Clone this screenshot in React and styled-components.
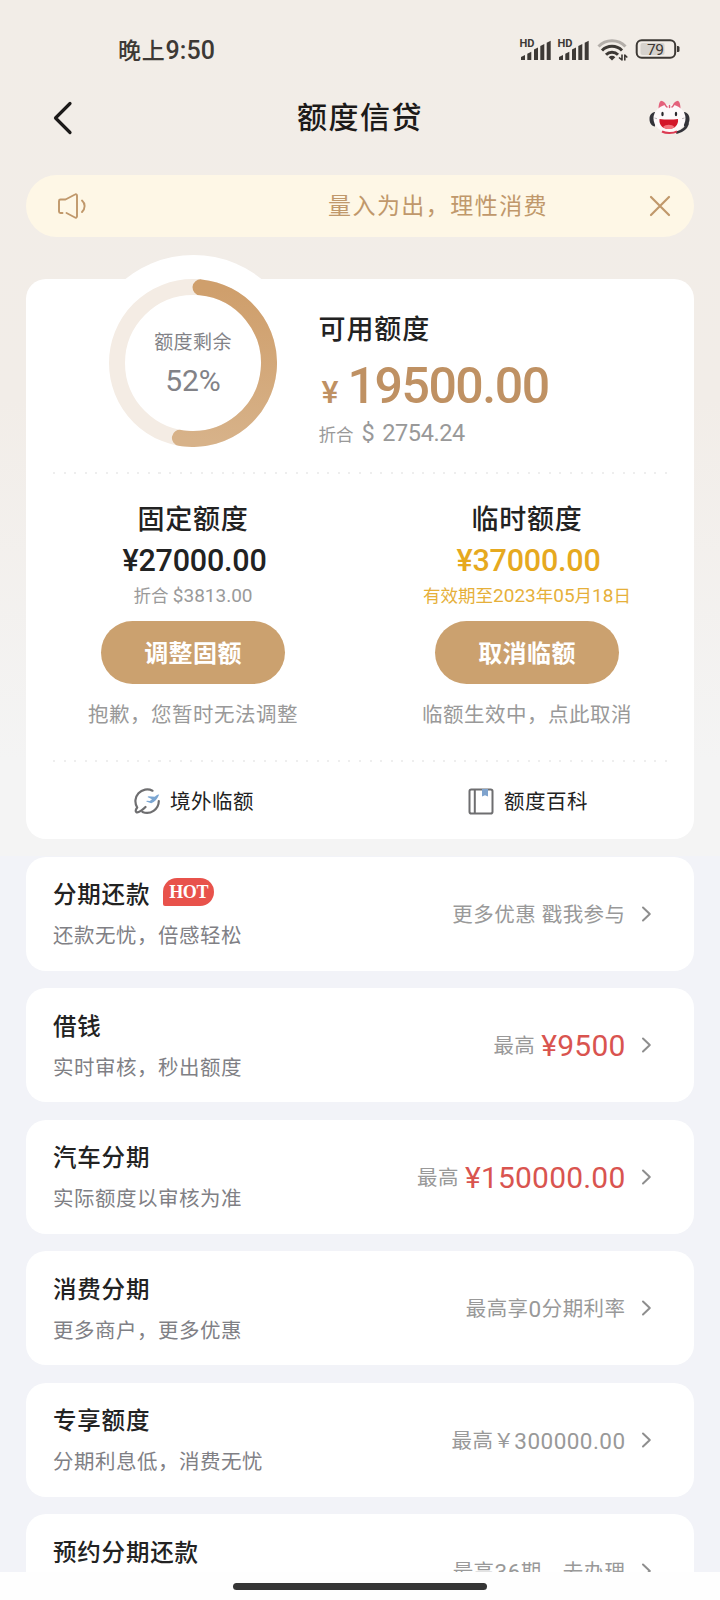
import React from 'react';
import styled, { createGlobalStyle } from 'styled-components';

const GlobalStyle = createGlobalStyle`
  * {
    box-sizing: border-box;
  }

  body {
    margin: 0;
    font-family: Roboto, 'Noto Sans CJK SC', sans-serif;
    color: #222;
  }
`;

const Screen = styled.div`
  width: 720px;
  height: 1600px;
  display: flex;
  flex-direction: column;
  overflow: hidden;
  background: #fefefe;
`;

const Page = styled.div`
  height: 1571.5px;
  flex: none;
  overflow: hidden;
  background: linear-gradient(180deg, #f2ede7 0, #f2ede8 400px, #f4f4f4 760px, #f4f4f4 856px, #f2f3f8 856px);
`;

const StatusBar = styled.div`
  height: 85px;
  padding: 17px 40px 0 118px;
  display: flex;
  align-items: center;
  justify-content: space-between;
`;

const Time = styled.div`
  font-size: 23px;
  line-height: 30px;
  font-weight: 500;
  letter-spacing: 0.7px;
  color: #3d3935;

  span {
    font-size: 25px;
    letter-spacing: 0.1px;
  }
`;

const NavBar = styled.div`
  height: 65px;
  padding: 0 28px 0 52px;
  display: grid;
  grid-template-columns: 80px 1fr 104px;
  align-items: center;
`;

const Title = styled.h1`
  margin: 0;
  padding-top: 1px;
  font-size: 30px;
  line-height: 40px;
  font-weight: 500;
  letter-spacing: 1.5px;
  text-align: center;
  color: #1c1a19;
`;

const Helper = styled.div`
  display: flex;
  justify-content: flex-end;
`;

const Notice = styled.div`
  height: 62px;
  margin: 25px 26px 0;
  padding: 0 23px 0 31px;
  border-radius: 31px;
  display: flex;
  align-items: center;
  background: #fef7e6;
  color: #c0986b;
`;

const NoticeText = styled.div`
  flex: 1;
  padding: 2px 0 0 241px;
  font-size: 23px;
  line-height: 32px;
  letter-spacing: 1.45px;
  white-space: nowrap;
`;

const Panel = styled.section`
  height: 559.5px;
  margin: 42px 26px 0;
  border-radius: 20px;
  background: #fff;
`;

const Summary = styled.div`
  height: 193px;
  padding-left: 58.5px;
  display: flex;
`;

const Dial = styled.div`
  width: 217px;
  height: 217px;
  margin-top: -24.5px;
  border-radius: 50%;
  display: grid;
  place-items: center;
  background: #fff;

  & > * {
    grid-area: 1 / 1;
  }
`;

const DialLabel = styled.div`
  text-align: center;
  color: #828287;

  p {
    margin: 0;
    font-size: 19px;
    line-height: 28px;
    letter-spacing: 0.4px;
  }

  strong {
    display: block;
    margin-top: 7px;
    font-size: 30px;
    line-height: 34px;
    font-weight: 400;
    letter-spacing: 0;
  }
`;

const Available = styled.div`
  padding: 32px 0 0 17px;

  h2 {
    margin: 0;
    font-size: 27px;
    line-height: 38px;
    font-weight: 500;
    letter-spacing: 0.9px;
  }
`;

const BigAmount = styled.div`
  height: 54px;
  margin-top: 10px;
  display: flex;
  align-items: baseline;
  color: #bf9163;
  font-size: 50px;
  line-height: 54px;
  font-weight: 500;
  letter-spacing: -1.45px;

  small {
    width: 29px;
    padding-left: 3px;
    font-size: 32px;
    letter-spacing: 0;
  }
`;

const Converted = styled.div`
  margin-top: 6px;
  display: flex;
  align-items: baseline;
  font-size: 17.5px;
  line-height: 28px;
  color: #999;

  span {
    margin-left: 8px;
    font-size: 23.5px;
    letter-spacing: -0.4px;
    word-spacing: 2.5px;
  }
`;

const Dots = styled.div`
  height: 2px;
  margin: 0 26px 0 27px;
  background: repeating-linear-gradient(90deg, #eee 0 2px, transparent 2px 10.55px);
`;

const Columns = styled.div`
  display: flex;
`;

const Column = styled.div`
  flex: 1;
  height: 286px;
  padding-top: 27px;
  display: flex;
  flex-direction: column;
  align-items: center;

  h3 {
    margin: 0;
    font-size: 27px;
    line-height: 38px;
    font-weight: 500;
    letter-spacing: 0.8px;
  }
`;

const Amount = styled.div`
  margin-top: 1px;
  padding-left: 3px;
  font-size: 30.5px;
  line-height: 42px;
  font-weight: 500;
  letter-spacing: -0.2px;
  color: ${(props) => (props.$gold ? '#e6a91f' : '#222')};
`;

const Hint = styled.div`
  font-size: 17.5px;
  line-height: 28px;
  white-space: nowrap;
  color: ${(props) => (props.$gold ? '#e6b03a' : '#9a9a9a')};

  span {
    font-size: 19px;
  }
`;

const Pill = styled.button`
  width: 184px;
  height: 63px;
  margin-top: 11px;
  padding: 0 0 2px;
  border: none;
  border-radius: 32px;
  background: #cba16f;
  color: #fff;
  font-family: inherit;
  font-size: 24px;
  font-weight: 700;
  letter-spacing: 0.4px;
`;

const Remark = styled.div`
  margin-top: 16px;
  font-size: 20.5px;
  line-height: 30px;
  letter-spacing: 0.5px;
  white-space: nowrap;
  color: #999;
`;

const Shortcut = styled.div`
  flex: 1;
  height: 75px;
  padding-left: 2px;
  display: flex;
  align-items: center;
  justify-content: center;
  gap: 10px;
  font-size: 20.5px;
  letter-spacing: 0.5px;

  svg {
    margin-top: 3px;
  }
`;

const List = styled.div`
  margin: 18px 26px 0;
  display: flex;
  flex-direction: column;
  gap: 17.5px;
`;

const Row = styled.div`
  height: 114px;
  padding: 0 41px 0 27px;
  border-radius: 20px;
  display: flex;
  align-items: center;
  background: #fff;
`;

const RowText = styled.div`
  flex: 1;
  padding-top: 2px;
`;

const RowTitle = styled.div`
  display: flex;
  align-items: center;
  gap: 13px;
  font-size: 23.5px;
  line-height: 36px;
  font-weight: 500;
  letter-spacing: 0.8px;
`;

const RowNote = styled.div`
  min-height: 32px;
  margin-top: 7px;
  font-size: 20.5px;
  line-height: 32px;
  letter-spacing: 0.5px;
  color: #808085;
`;

const HotTag = styled.span`
  width: 51px;
  height: 28px;
  margin-top: -6px;
  border-radius: 14px 14px 14px 2px;
  background: #e8524b;
  color: #fff;
  font-family: 'Liberation Serif', serif;
  font-size: 18px;
  line-height: 28px;
  font-weight: 700;
  letter-spacing: -0.3px;
  text-align: center;
`;

const RowValue = styled.div`
  margin-right: 15.5px;
  padding-top: 2px;
  display: flex;
  align-items: center;
  font-size: 20.5px;
  line-height: 40px;
  letter-spacing: 0.45px;
  color: #999;
  white-space: pre;

  span {
    font-size: 22.5px;
  }

  em {
    margin-left: 6px;
    font-size: 30px;
    font-style: normal;
    letter-spacing: 0.2px;
    color: #d9544f;
  }
`;

const HomeArea = styled.div`
  flex: 1;
  padding-top: 11.5px;
  display: flex;
  justify-content: center;
`;

const HomeBar = styled.div`
  width: 254px;
  height: 7px;
  border-radius: 4px;
  background: #353535;
`;

const rows = [
  { title: '分期还款', hot: true, note: '还款无忧，倍感轻松', value: '更多优惠 戳我参与' },
  { title: '借钱', note: '实时审核，秒出额度', value: '最高', money: '¥9500' },
  { title: '汽车分期', note: '实际额度以审核为准', value: '最高', money: '¥150000.00' },
  { title: '消费分期', note: '更多商户，更多优惠', value: '最高享0分期利率' },
  { title: '专享额度', note: '分期利息低，消费无忧', value: '最高￥300000.00' },
  { title: '预约分期还款', value: '最高36期，去办理' },
];

// digits sit a little larger than the Chinese characters beside them
const withDigits = (text) =>
  text.split(/([$\d.]+)/).map((part, i) => (i % 2 ? <span key={i}>{part}</span> : part));

const signalBars = [
  [2, 16],
  [8.3, 12.7],
  [15, 8.5],
  [21.3, 5],
  [27.7, 1.7],
];

const Signal = ({ x }) => (
  <g transform={`translate(${x} 0)`}>
    <text x="0.5" y="7.8" fontSize="10" fontWeight="700" textLength="15" lengthAdjust="spacingAndGlyphs">HD</text>
    {signalBars.map(([left, top]) => (
      <path key={left} d={`M${left} ${top + 2}l4-2V21h-4z`} />
    ))}
  </g>
);

const StatusIcons = () => (
  <svg width="161" height="32" viewBox="0 -4 161 32" fill="#3d3935" fontFamily="Roboto, sans-serif">
    <Signal x={0} />
    <Signal x={38} />
    <g fill="none" stroke="#3d3935" strokeWidth="3">
      <path d="M79.5 7.5a18.5 18.5 0 0 1 27 0" stroke="#b3aea9" />
      <path d="M83 11.5a14 14 0 0 1 20 0" />
      <path d="M87 15.7a8.5 8.5 0 0 1 12 0" />
    </g>
    <path d="M93 21.5l-3.3-3.3a4.6 4.6 0 0 1 6.6 0z" />
    <g fill="none" strokeLinejoin="round">
      <path d="M103 15.5v5.5l-3-2.5M105.8 21.5V16l2.5 2.5" stroke="#f2ede7" strokeWidth="3.5" />
      <path d="M103 15.5v5.5l-3-2.5M105.8 21.5V16l2.5 2.5" stroke="#3d3935" strokeWidth="1.6" />
    </g>
    <rect x="117.7" y="1.2" width="38.5" height="17.6" rx="5" fill="none" stroke="#3d3935" strokeWidth="2" />
    <rect x="121.5" y="4" width="24" height="12" rx="2" fill="#d6d2cd" />
    <path d="M158 7h1a1.500 1.500 0 0 1 1.500 1.500v3a1.500 1.500 0 0 1-1.500 1.500h-1z" />
    <text x="128" y="15.500" fontSize="15.500" textLength="17">79</text>
  </svg>
);

const BackIcon = () => (
  <svg width="22" height="34" viewBox="0 0 22 34" fill="none" stroke="#1c1a19" strokeWidth="3.2" strokeLinecap="round" strokeLinejoin="round">
    <path d="M18 2.5L3.5 17 18 31.5" />
  </svg>
);

const CatIcon = () => (
  <svg width="44" height="37" viewBox="0 0 44 37">
    <path d="M10.500 10.500c0-4 .5-7.500 2.500-8.700 2.500.2 4.500 2 5.500 5zM32.500 10.500c0-4-.5-7.500-2.500-8.700-2.500.2-4.500 2-5.500 5z" fill="#e4627c" />
    <path d="M7 13c-3.500.5-5.500 3-5.500 7s2 7 5.500 7.500zM36 13c3.500.5 5.500 3 5.500 7s-2 7-5.500 7.500z" fill="#34343a" />
    <path d="M39.500 25c-1.500 4.500-5 7-10.500 8.500" fill="none" stroke="#34343a" strokeWidth="2.600" strokeLinecap="round" />
    <ellipse cx="21.500" cy="19.500" rx="16" ry="14" fill="#fdf9fa" />
    <path d="M14 32.500c4 2 11 2 15-.2" fill="none" stroke="#dc3b52" strokeWidth="2" />
    <path d="M17.500 6.500l1.500 1.500M25.500 6.500L24 8M21.500 6.500v2" stroke="#de5f78" strokeWidth="1.500" strokeLinecap="round" />
    <path d="M6.500 19l2.500.7M36.500 19l-2.500.7" stroke="#a9a4aa" strokeWidth=".8" />
    <ellipse cx="14.500" cy="15" rx="1.200" ry="2.200" fill="#29272b" />
    <ellipse cx="28" cy="15" rx="1.200" ry="2.200" fill="#29272b" />
    <path d="M11.500 20c6 .8 13 .8 18.500 0 .8 6-3.500 10-9.300 10S10.700 26 11.500 20z" fill="#d3172a" />
    <path d="M15 28c2.500-3 9-3 11.500 0-3 2.700-8.500 2.700-11.500 0z" fill="#f4737c" />
  </svg>
);

const SpeakerIcon = () => (
  <svg width="30" height="28" viewBox="0 0 30 28" fill="none" stroke="#c0986b" strokeWidth="1.9" strokeLinecap="round" strokeLinejoin="round">
    <path d="M5.500 21H3.500a1.500 1.500 0 0 1-1.500-1.500V9a1.500 1.500 0 0 1 1.500-1.500h5L18 2.500a1.300 1.300 0 0 1 2 1v21a1.300 1.300 0 0 1-2 1L9.500 21" />
    <path d="M25 8.500c3.500 3 3.500 8 0 11.500" />
  </svg>
);

const CloseIcon = () => (
  <svg width="22" height="22" viewBox="0 0 22 22" stroke="#c0986b" strokeWidth="2.2" strokeLinecap="round">
    <path d="M2 2l18 18M20 2L2 20" />
  </svg>
);

const Ring = ({ from, sweep }) => (
  <svg width="168" height="168" viewBox="0 0 168 168" fill="none" strokeWidth="16">
    <defs>
      {/* runs along x because the arc is turned to start near the top */}
      <linearGradient id="ring" x1="1" y1="0" x2="0" y2="0">
        <stop offset="0" stopColor="#cf9f6c" />
        <stop offset="1" stopColor="#d7b289" />
      </linearGradient>
    </defs>
    <circle cx="84" cy="84" r="76" stroke="#f4ece4" />
    <circle
      cx="84"
      cy="84"
      r="76"
      pathLength="360"
      strokeDasharray={`${sweep} 360`}
      transform={`rotate(${from - 90} 84 84)`}
      stroke="url(#ring)"
      strokeLinecap="round"
    />
  </svg>
);

const PlaneIcon = () => (
  <svg width="26" height="27" viewBox="0 0 26 27" fill="none" strokeLinecap="round">
    <path d="M18.500 2.700A11.800 11.800 0 0 0 3.200 19.500M24.800 13A11.800 11.800 0 0 1 8.500 23.900M3.200 19.500c-2.200 3-2 5.300.8 4.700 2.500-.7 5-2.700 7.500-5.200" stroke="#6e6e70" strokeWidth="2.200" />
    <path d="M25.200 6.500c-1.800-.2-3 .8-4.500 2.300l-6.200-.6-1 .8 4.500 2.300-2.200 1.800-3-.3-.6.600 5 1.800c3.500-1 6-4 8-8.700z" fill="#7ba6d2" />
  </svg>
);

const BookIcon = () => (
  <svg width="26" height="27" viewBox="0 0 26 27" fill="none" stroke="#6e6e70" strokeWidth="2">
    <rect x="1.500" y="1.500" width="23" height="24" rx="1.800" />
    <path d="M6.800 1.500v24" />
    <path d="M14 1h6v7.500L17 7.300l-3 1.200z" fill="#7fa3cd" stroke="none" />
  </svg>
);

const ArrowIcon = () => (
  <svg width="12" height="18" viewBox="0 0 12 18" fill="none" stroke="#8e8e8e" strokeWidth="2" strokeLinecap="round" strokeLinejoin="round">
    <path d="M2 2.5L8.800 9 2 15.500" />
  </svg>
);

const App = () => {
  return (
    <>
      <GlobalStyle />
      <Screen>
        <Page>
          <StatusBar>
            <Time>晚上<span>9:50</span></Time>
            <StatusIcons />
          </StatusBar>
          <NavBar>
            <BackIcon />
            <Title>额度信贷</Title>
            <Helper>
              <CatIcon />
            </Helper>
          </NavBar>
          <Notice>
            <SpeakerIcon />
            <NoticeText>量入为出，理性消费</NoticeText>
            <CloseIcon />
          </Notice>

          <Panel>
            <Summary>
              <Dial>
                <Ring from={5.7} sweep={184.3} />
                <DialLabel>
                  <p>额度剩余</p>
                  <strong>52%</strong>
                </DialLabel>
              </Dial>
              <Available>
                <h2>可用额度</h2>
                <BigAmount>
                  <small>¥</small>19500.00
                </BigAmount>
                <Converted>
                  折合<span>$ 2754.24</span>
                </Converted>
              </Available>
            </Summary>
            <Dots />
            <Columns>
              <Column>
                <h3>固定额度</h3>
                <Amount>¥27000.00</Amount>
                <Hint>{withDigits('折合 $3813.00')}</Hint>
                <Pill>调整固额</Pill>
                <Remark>抱歉，您暂时无法调整</Remark>
              </Column>
              <Column>
                <h3>临时额度</h3>
                <Amount $gold>¥37000.00</Amount>
                <Hint $gold>{withDigits('有效期至2023年05月18日')}</Hint>
                <Pill>取消临额</Pill>
                <Remark>临额生效中，点此取消</Remark>
              </Column>
            </Columns>
            <Dots />
            <Columns>
              <Shortcut>
                <PlaneIcon />
                境外临额
              </Shortcut>
              <Shortcut>
                <BookIcon />
                额度百科
              </Shortcut>
            </Columns>
          </Panel>

          <List>
            {rows.map((row) => (
              <Row key={row.title}>
                <RowText>
                  <RowTitle>
                    {row.title}
                    {row.hot && <HotTag>HOT</HotTag>}
                  </RowTitle>
                  <RowNote>{row.note}</RowNote>
                </RowText>
                <RowValue>
                  {withDigits(row.value)}
                  {row.money && <em>{row.money}</em>}
                </RowValue>
                <ArrowIcon />
              </Row>
            ))}
          </List>
        </Page>
        <HomeArea>
          <HomeBar />
        </HomeArea>
      </Screen>
    </>
  );
};

export default App;
